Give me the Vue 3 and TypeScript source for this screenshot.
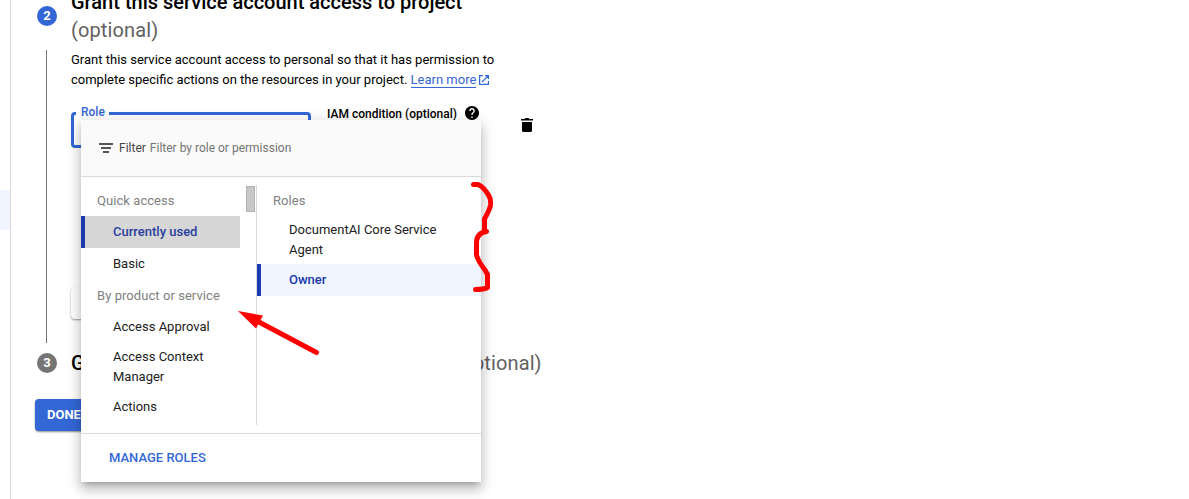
<script setup lang="ts">
interface Group {
  title: string
  items: { label: string; kind?: 'current' | 'tall' }[]
}

const groups: Group[] = [
  {
    title: 'Quick access',
    items: [{ label: 'Currently used', kind: 'current' }, { label: 'Basic', kind: 'tall' }],
  },
  {
    title: 'By product or service',
    items: [{ label: 'Access Approval' }, { label: 'Access Context Manager' }, { label: 'Actions' }],
  },
]
</script>

<template>
  <div class="page">
    <aside class="rail"><div class="rail-active"></div></aside>
    <main class="main">
      <section class="step step-two">
        <div class="track">
          <span class="badge">2</span>
          <span class="line"></span>
        </div>
        <div class="body">
          <h2 class="title title-two"><span class="t-main">Grant this service account access to project</span><br /><span class="opt">(optional)</span></h2>
          <p class="desc">
            <span class="d1">Grant this service account access to personal so that it has permission to</span><br />
            <span class="d2">complete specific actions on the resources in your project. </span><a class="link">Learn more</a>
            <svg class="ext" width="12" height="12" viewBox="0 0 12 12" fill="none" stroke="#3367d6" stroke-width="1.2">
              <path d="M5 1.6H1.6V10.4H10.4V7M7 1.6h3.4V5M10.4 1.6L4 8" />
            </svg>
          </p>
          <div class="fields">
            <div class="role"><span class="role-label">Role</span></div>
            <div class="iam">
              <span class="iam-text">IAM condition (optional)</span>
              <svg width="14" height="14" viewBox="2 2 20 20"><path d="M12 2C6.48 2 2 6.48 2 12s4.48 10 10 10 10-4.48 10-10S17.52 2 12 2zm1 17h-2v-2h2v2zm2.07-7.75l-.9.92C13.45 12.900 13 13.500 13 15h-2v-.5c0-1.100.45-2.100 1.170-2.830l1.240-1.260c.37-.36.59-.86.59-1.410 0-1.100-.9-2-2-2s-2 .9-2 2H8c0-2.210 1.790-4 4-4s4 1.790 4 4c0 .88-.36 1.680-.93 2.250z" stroke="#000" stroke-width="0" /></svg>
            </div>
            <svg class="trash" width="12" height="14" viewBox="0 0 12 14"><path d="M1 4h10v8.500a1.500 1.500 0 0 1-1.500 1.500h-7A1.500 1.500 0 0 1 1 12.500zM0 1h3.500l1-1h3l1 1H12v1.500H0z" /></svg>
          </div>
          <div class="add"></div>
        </div>
      </section>
      <section class="step step-three">
        <div class="track"><span class="badge grey">3</span></div>
        <h2 class="title title-three">Grant users access to this service account <span class="opt">(optional)</span></h2>
      </section>
      <button class="done">DONE</button>
    </main>

    <div class="popup">
      <div class="filter">
        <svg width="14" height="10" viewBox="0 0 14 10"><path fill="#555" d="M0 0h14v2H0zM2 4h10v2H2zM4 8h6v2H4z" /></svg>
        <span class="f-label">Filter</span>
        <span class="f-hint">Filter by role or permission</span>
      </div>
      <div class="columns">
        <div class="left">
          <div class="list">
            <template v-for="g in groups" :key="g.title">
              <div class="head">{{ g.title }}</div>
              <div v-for="i in g.items" :key="i.label" class="item" :class="i.kind">{{ i.label }}</div>
            </template>
          </div>
          <div class="thumb"></div>
        </div>
        <div class="right">
          <div class="head roles-head">Roles</div>
          <div class="item doc">DocumentAI Core Service Agent</div>
          <div class="item owner">Owner</div>
        </div>
      </div>
      <div class="footer"><span class="manage">MANAGE ROLES</span></div>
    </div>

    <svg class="marks" width="1189" height="499" viewBox="0 0 1189 499">
      <path d="M473.500 184.500H478Q484 187 489 196Q491 199 490.500 205Q490 209 484.500 219V231.500H486.500Q476.500 233 476.500 243V255Q478 261 485 270L487.500 274.500V287.500Q484 289.500 475.500 289.500" fill="none" stroke="#f00" stroke-width="5" stroke-linecap="round" stroke-linejoin="round" />
      <path d="M258 321.500L316.500 352.500" stroke="#f00" stroke-width="5" stroke-linecap="round" />
      <path d="M238 311L263 315.500L256 328.500Z" fill="#f00" />
    </svg>
  </div>
</template>

<style>
body { margin: 0; overflow: hidden; background: #fff; }
</style>

<style scoped>
* { box-sizing: border-box; }
.page {
  position: relative;
  display: flex;
  width: 1189px;
  height: 499px;
  overflow: hidden;
  font-family: Roboto, "Liberation Sans", sans-serif;
  font-size: 13px;
  line-height: 20px;
  color: #000;
}
.rail { flex: 0 0 11px; padding-top: 190px; border-right: 1px solid #dadada; }
.rail-active { height: 40px; background: #f0f5ff; }
.main { flex: 1; padding-left: 24px; }
.step { display: flex; }
.step-two { height: 343px; }
.step-three { height: 56px; padding-top: 10px; }
.track { display: flex; flex-direction: column; align-items: center; width: 24px; margin-right: 12px; }
.badge {
  width: 20px;
  height: 20px;
  border-radius: 50%;
  background: #3367d6;
  color: #fff;
  font-weight: 700;
  text-align: center;
}
.step-two .badge { margin-top: 6px; }
.step-two .badge, .step .grey { flex: 0 0 20px; }
.badge.grey { background: #757575; }
.line { width: 1px; height: 293px; margin-top: 24px; margin-right: 1px; background: #757575; }
.title { margin: 0; font-size: 20px; line-height: 28px; font-weight: 500; white-space: nowrap; }
.title-two { margin-top: -12px; }
.title-three { margin-top: -4px; }
.opt { color: #616161; font-weight: 450; letter-spacing: .12px; }
.desc { margin: 6px 0 0; white-space: nowrap; }
.link { color: #3367d6; border-bottom: 1px solid #3367d6; }
.ext { margin-left: 2px; vertical-align: -2px; }
.fields { display: flex; height: 36px; margin-top: 22px; }
.role { width: 240px; height: 36px; border: 3px solid #3367d6; border-radius: 4px; }
.role-label {
  display: block;
  width: 33px;
  margin: -11px 0 0 2px;
  padding-left: 5px;
  background: #fff;
  color: #3367d6;
  font-size: 12px;
  line-height: 16px;
  font-weight: 500;
}
.iam { display: flex; width: 178px; margin-left: 16px; font-size: 12px; line-height: 16px; font-weight: 500; }
.iam-text { width: 138px; margin-top: -6px; white-space: nowrap; }
.iam svg { margin-top: -6px; }
.trash { margin: 6px 0 0 16px; }
.add { width: 120px; height: 32px; margin-top: 139px; border-radius: 4px; box-shadow: 0 1px 2px rgba(0, 0, 0, .4); }
.done {
  width: 72px;
  height: 32px;
  padding: 0 12px;
  border: 0;
  border-radius: 4px;
  background: #3367d6;
  box-shadow: 0 1px 2px rgba(0, 0, 0, .45);
  color: #fff;
  font: 700 13px/32px Roboto, sans-serif;
  text-align: left;
}
.popup {
  position: absolute;
  left: 81px;
  top: 120px;
  width: 400px;
  height: 362px;
  background: #fff;
  box-shadow: 0 5px 5px -3px rgba(0, 0, 0, .2), 0 8px 10px 1px rgba(0, 0, 0, .14), 0 3px 14px 2px rgba(0, 0, 0, .12);
  color: #212121;
}
.filter { display: flex; align-items: center; height: 57px; padding: 0 0 1px 18px; background: #fafafa; border-bottom: 1px solid #dadada; font-size: 12px; }
.f-label { margin-left: 6px; color: #444; }
.f-hint { margin-left: 4px; color: #757575; }
.columns { display: flex; height: 256px; padding-top: 8px; }
.left { display: flex; width: 176px; height: 240px; border-right: 1px solid #dadada; }
.list { width: 159px; }
.thumb { width: 9px; height: 26px; margin: 1px 0 0 6px; background: #c8c8c8; border: 1px solid #b2b2b2; }
.head { height: 31px; padding: 6px 0 0 16px; color: #808080; line-height: 20px; letter-spacing: .06px; white-space: nowrap; }
.item { padding: 6px 16px 4px 32px; }
.current { height: 32px; padding: 6px 0 6px 28px; border-left: 4px solid #1a3ab0; background: #d6d6d6; color: #2a409e; font-weight: 500; }
.tall { height: 32px; padding-top: 6px; }
.right { flex: 1; }
.roles-head { height: 29px; }
.owner { height: 32px; padding: 6px 0 0 28px; border-left: 4px solid #1a3ab0; background: #f0f5ff; color: #1a3ab0; font-weight: 500; }
.footer { height: 49px; padding: 14px 28px; border-top: 1px solid #dadada; color: #3367d6; font-weight: 500; }
.marks { position: absolute; left: 0; top: 0; }
</style>
